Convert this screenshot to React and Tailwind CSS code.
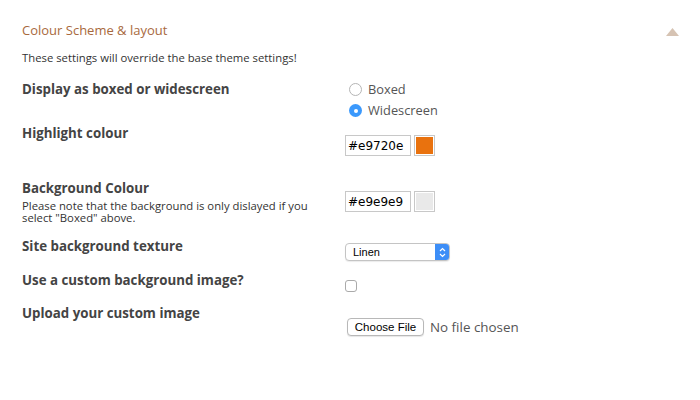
import { useState } from 'react';

const font = { fontFamily: '"Open Sans", "Liberation Sans", sans-serif' };

function Radio({ checked, label, onClick }) {
  return (
    <div className="flex h-[21px] cursor-pointer items-center" onClick={onClick}>
      {checked ? (
        <span className="ml-[4px] flex h-[13px] w-[13px] items-center justify-center rounded-full bg-[#3b99fc]">
          <span className="h-[4px] w-[4px] rounded-full bg-white"></span>
        </span>
      ) : (
        <span className="ml-[4px] h-[13px] w-[13px] rounded-full border border-[#b5b5b5] bg-white"></span>
      )}
      <span className="ml-[6px] text-[12.8px] text-[#555]">{label}</span>
    </div>
  );
}

function ColourField({ value }) {
  return (
    <div className="flex items-center gap-[3px]">
      <div className="flex h-[21px] w-[66px] items-center border border-[#c8c8c8] bg-white pl-[2px] text-[12px] text-black" style={{ fontFamily: '"DejaVu Sans", sans-serif' }}>
        {value}
      </div>
      <div className="h-[21px] w-[21px] border border-[#c8c8c8] bg-white p-[1px]">
        <div className="h-full w-full" style={{ backgroundColor: value }}></div>
      </div>
    </div>
  );
}

export default function App() {
  const [layout, setLayout] = useState('widescreen');
  const [custom, setCustom] = useState(false);

  return (
    <div className="h-[400px] w-[700px] overflow-hidden bg-white" style={font}>
      <div className="flex items-center justify-between pl-[22px] pr-[21px] pt-[21px]">
        <h3 className="text-[13px] leading-[18px] text-[#a8693d]">Colour Scheme &amp; layout</h3>
        <svg width="13" height="8" viewBox="0 0 13 8" className="mt-[4px]">
          <polygon points="6.5,0 13,8 0,8" fill="#d6c3b3" />
        </svg>
      </div>
      <p className="mt-[12px] pl-[22px] text-[11.3px] leading-[14px] text-[#333]">
        These settings will override the base theme settings!
      </p>

      <div className="mt-[14px] pl-[22px] text-[#444]">
        <div className="flex">
          <div className="w-[323px] pt-[2px] text-[13.3px] font-bold leading-4">Display as boxed or widescreen</div>
          <div>
            <Radio label="Boxed" checked={layout === 'boxed'} onClick={() => setLayout('boxed')} />
            <Radio label="Widescreen" checked={layout === 'widescreen'} onClick={() => setLayout('widescreen')} />
          </div>
        </div>

        <div className="flex h-[51px]">
          <div className="mt-[4px] w-[323px] text-[13.3px] font-bold leading-4">Highlight colour</div>
          <div className="mt-[14px]">
            <ColourField value="#e9720e" />
          </div>
        </div>

        <div className="flex">
          <div className="mt-[8px] w-[323px]">
            <div className="text-[13.3px] font-bold leading-4">Background Colour</div>
            <div className="mt-[4px] w-[300px] text-[11.3px] leading-[12px] text-[#333]">
              Please note that the background is only dislayed if you select "Boxed" above.
            </div>
          </div>
          <div className="mt-[19px]">
            <ColourField value="#e9e9e9" />
          </div>
        </div>

        <div className="mt-[10px] flex">
          <div className="w-[323px] pt-[4px] text-[13.3px] font-bold leading-4">Site background texture</div>
          <div className="mt-[9px] flex h-[18px] w-[105px] overflow-hidden rounded-[4px] border border-[#c4c4c4] bg-white shadow-[0_1px_1px_rgba(0,0,0,0.08)]">
            <span className="flex-1 pl-[7px] text-[11px] leading-[16px] text-black" style={{ fontFamily: '"Liberation Sans", sans-serif' }}>Linen</span>
            <span className="flex w-[14px] items-center justify-center bg-[#3d8ef7]">
              <svg width="7" height="11" viewBox="0 0 7 11">
                <path d="M1 4 L3.5 1.5 L6 4 M1 7 L3.5 9.5 L6 7" stroke="white" strokeWidth="1.2" fill="none" />
              </svg>
            </span>
          </div>
        </div>

        <div className="flex">
          <div className="mt-[11px] w-[323px] text-[13.3px] font-bold leading-4">Use a custom background image?</div>
          <div
            className={`mt-[19px] h-[12px] w-[12px] cursor-pointer rounded-[3px] border border-[#aaa] ${custom ? 'bg-[#3b99fc]' : 'bg-white'}`}
            onClick={() => setCustom(!custom)}
          ></div>
        </div>

        <div className="flex">
          <div className="mt-[13px] w-[323px] text-[13.3px] font-bold leading-4">Upload your custom image</div>
          <div className="ml-[2px] mt-[25px] flex items-center">
            <button
              type="button"
              className="h-[18px] w-[77px] rounded-[4px] border border-[#b8b8b8] bg-white text-[11.5px] leading-[16px] text-black shadow-[0_1px_1px_rgba(0,0,0,0.1)]"
              style={{ fontFamily: '"Liberation Sans", sans-serif' }}
            >
              Choose File
            </button>
            <span className="ml-[6px] text-[13.4px] text-[#555]">No file chosen</span>
          </div>
        </div>
      </div>
    </div>
  );
}
